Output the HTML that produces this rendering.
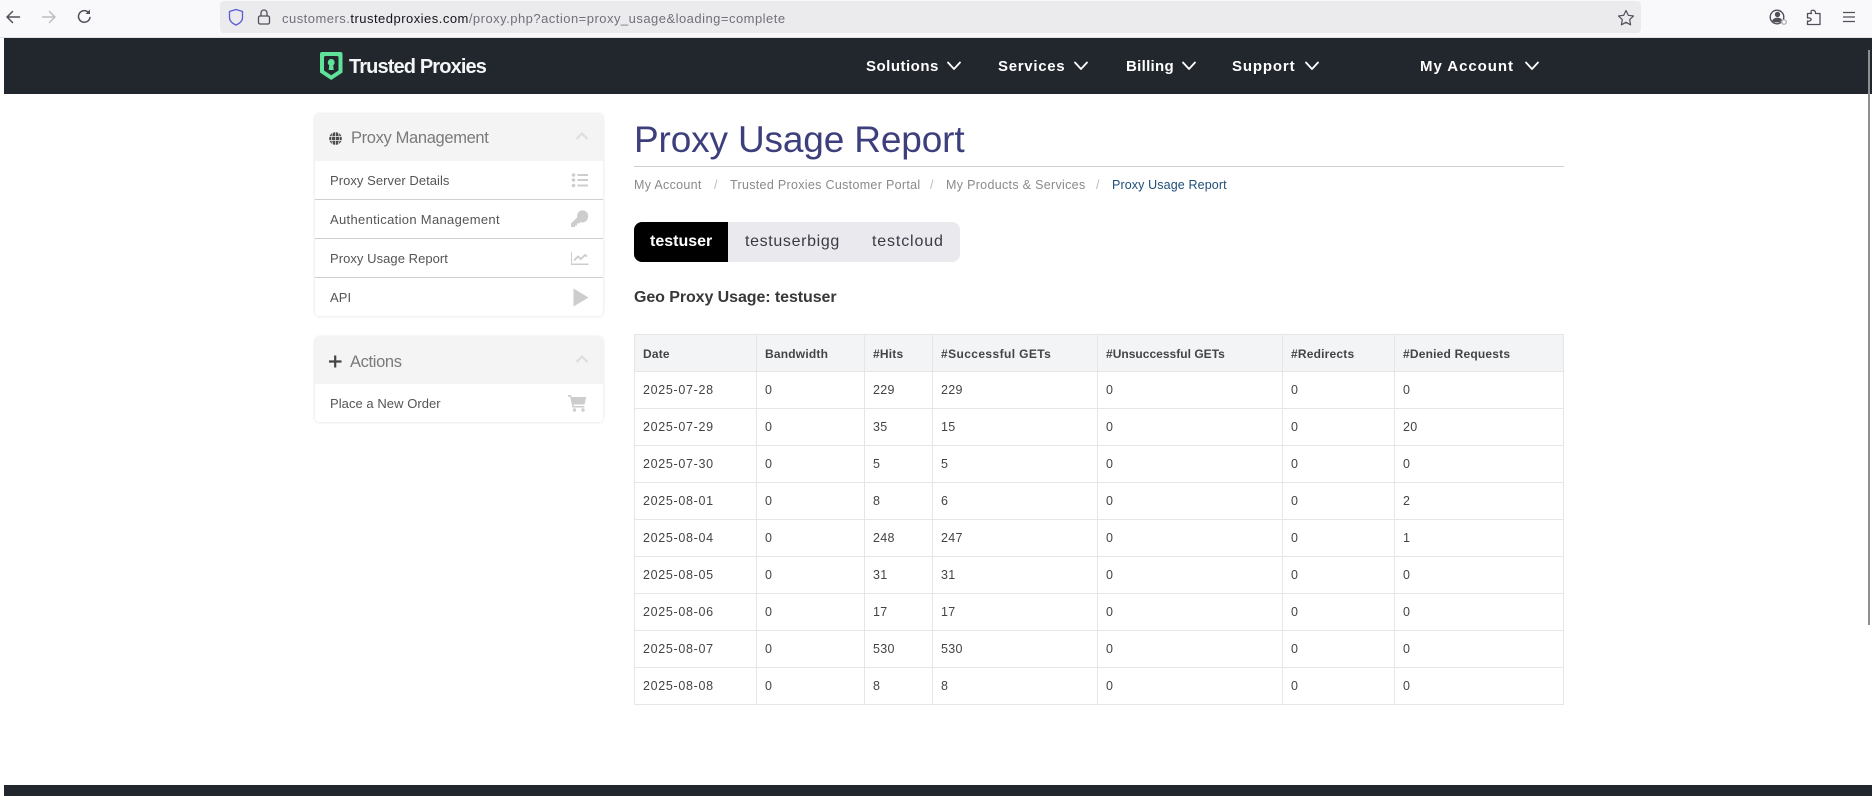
<!DOCTYPE html>
<html lang="en">
<head>
<meta charset="utf-8">
<title>Proxy Usage Report</title>
<style>
html,body{margin:0;padding:0;width:1872px;height:796px;overflow:hidden;background:#fff;font-family:"Liberation Sans",sans-serif}
.t{position:absolute;white-space:nowrap;line-height:20px;height:20px}
svg{position:absolute;overflow:visible}
.toolbar{position:absolute;left:0;top:0;width:1872px;height:37px;background:#f9f9fb;border-bottom:1px solid #e3e3e6}
.urlbar{position:absolute;left:220px;top:1px;width:1421px;height:32px;background:#ebebee;border-radius:4px}
.nav{position:absolute;left:4px;top:38px;width:1868px;height:56px;background:#22262d}
.foot{position:absolute;left:4px;top:785px;width:1868px;height:11px;background:#22262d}
.sb{position:absolute;left:1868px;top:50px;width:2px;height:575px;background:#8f8f8f}
.nl{color:#fff;font-weight:bold;font-size:15px;letter-spacing:.5px}
.panel{position:absolute;left:315px;width:288px;background:#fff;border-radius:4px;box-shadow:0 0 3px rgba(0,0,0,.14)}
.ph{position:absolute;left:0;top:0;width:288px;height:47px;background:#f4f4f4;border-radius:4px 4px 0 0}
.sep{position:absolute;left:315px;width:288px;height:1px;background:#cfcfcf}
.pt{color:#7a7a7a;font-size:16.5px;letter-spacing:-.35px}
.it{color:#555;font-size:13px;letter-spacing:.05px}
.bc{color:#8a8a8a;font-size:12.5px;letter-spacing:.31px}
table{position:absolute;left:634px;top:334px;width:929px;border-collapse:collapse;table-layout:fixed;font-size:12.5px;color:#444}
td,th{border:1px solid #e6e6e6;height:36px;padding:0 0 0 8px;text-align:left;letter-spacing:.32px;font-weight:normal}
td:first-child{letter-spacing:.68px}
th{background:#f3f4f6;font-weight:bold;font-size:12px;letter-spacing:.2px;padding-top:1px;height:35px}
th:first-child{letter-spacing:.2px}
</style>
</head>
<body>
<div class="toolbar"></div>
<div class="urlbar"></div>
<svg style="left:0;top:0" width="300" height="36" fill="none" stroke-linecap="round" stroke-linejoin="round">
<path d="M19.500 17H7M12.500 11.500L7 17l5.500 5.500" stroke="#50505a" stroke-width="1.500"/>
<path d="M42.500 17H55M49.500 11.500L55 17l-5.500 5.500" stroke="#bdbdc2" stroke-width="1.500"/>
<path d="M90 17.500a5.800 5.800 0 1 1-2-5.500" stroke="#50505a" stroke-width="1.500"/>
<path d="M90 9.500v4.500h-4.500z" fill="#50505a"/>
<path d="M236 9.500l6.500 2v6c0 3.500-3 6-6.500 7.500-3.500-1.500-6.500-4-6.500-7.500v-6z" stroke="#5b5bd6" stroke-width="1.300"/>
<rect x="258.500" y="16" width="11" height="8" rx="1.500" stroke="#50505a" stroke-width="1.300"/>
<path d="M261 16v-3a3 3 0 0 1 6 0v3" stroke="#50505a" stroke-width="1.300"/>
</svg>
<div class="t" style="left:282px;top:9px;font-size:13px;color:#70707a;letter-spacing:.48px">customers.<span style="color:#15141a">trustedproxies.com</span>/proxy.php?action=proxy_usage&amp;loading=complete</div>
<svg style="left:1600px;top:0" width="272" height="36" fill="none" stroke="#50505a" stroke-width="1.200" stroke-linejoin="round">
<path d="M26 10.500l2.300 4.800 5.200.7-3.800 3.600.9 5.200-4.600-2.500-4.600 2.500.9-5.200-3.800-3.600 5.200-.7z"/>
<circle cx="177" cy="17" r="6.800" stroke-width="1.400"/>
<circle cx="177.500" cy="14.500" r="2.700" fill="#50505a" stroke="none"/>
<path d="M172 21c1-2.500 3-3.300 5.500-3.300s3.500.8 4.500 2.200l-2 2.500h-6z" fill="#50505a" stroke="none"/>
<circle cx="184" cy="22" r="2.300" stroke="#a8a8ae" fill="#f9f9fb"/>
<path d="M207.500 24.500h12.500V13.500h-4.500c.8-3.500-4.500-4.500-4.500-1.500 0 .5.200 1 .5 1.500h-4v4.500c2.800-.5 4 .8 3.500 2-.4 1-2 1.500-3.500 1z" stroke-width="1.300"/>
<path d="M243 12.500h12M243 17h12M243 21.500h12" stroke-width="1.200"/>
</svg>

<div class="nav"></div>
<svg style="left:319px;top:51px" width="25" height="30" viewBox="0 0 25 30">
<path d="M3 1h18.500a2 2 0 0 1 2 2v18.500L12.200 29 1 21.500V3a2 2 0 0 1 2-2z" fill="#5fe39a"/>
<path d="M6.500 5h11.500a1.500 1.500 0 0 1 1.500 1.500v13l-7.300 4.800L5 19.500v-13A1.500 1.500 0 0 1 6.500 5z" fill="#22262d"/>
<path d="M12.200 8a3.500 3.500 0 0 1 2 6.300l.5 4.700H9.700l.5-4.700a3.500 3.500 0 0 1 2-6.300z" fill="#5fe39a"/>
</svg>
<div class="t" style="left:349px;top:57px;font-size:20px;font-weight:bold;color:#f4f5f6;letter-spacing:-.87px">Trusted Proxies</div>
<div class="t nl" style="left:866px;top:57px">Solutions</div>
<div class="t nl" style="left:998px;top:57px;letter-spacing:.7px">Services</div>
<div class="t nl" style="left:1126px;top:57px;letter-spacing:.3px">Billing</div>
<div class="t nl" style="left:1232px;top:57px;letter-spacing:.85px">Support</div>
<div class="t nl" style="left:1420px;top:57px;letter-spacing:.95px">My Account</div>
<svg style="left:0;top:0" width="1872" height="94" fill="none" stroke="#fff" stroke-width="1.800" stroke-linecap="round" stroke-linejoin="round">
<path d="M948 62.500l6 6.500 6-6.500M1075 62.500l6 6.500 6-6.500M1183 62.500l6 6.500 6-6.500M1306 62.500l6 6.500 6-6.500M1526 62.500l6 6.500 6-6.500"/>
</svg>
<div class="sb"></div>

<div class="panel" style="top:114px;height:202px"><div class="ph"></div></div>
<div class="panel" style="top:337px;height:85px"><div class="ph"></div></div>
<div class="sep" style="top:199px"></div>
<div class="sep" style="top:238px"></div>
<div class="sep" style="top:277px"></div>

<svg style="left:329px;top:132px" width="13" height="13" viewBox="0 0 13 13">
<circle cx="6.500" cy="6.500" r="6.300" fill="#4a4a4a"/>
<path d="M0 4.500h13M0 8.500h13M6.500 0v13M3.800 1c-1.500 3.500-1.500 7.500 0 11M9.200 1c1.500 3.500 1.500 7.500 0 11" stroke="#f4f4f4" stroke-width=".7" fill="none"/>
</svg>
<div class="t pt" style="left:351px;top:128px">Proxy Management</div>
<svg style="left:329px;top:355px" width="13" height="13"><path d="M6.200 0.500v12M0 6.500h12.500" stroke="#444" stroke-width="2.200"/></svg>
<div class="t pt" style="left:350px;top:352px">Actions</div>
<svg style="left:0;top:0" width="700" height="430" fill="none" stroke="#dedede" stroke-width="2.200">
<path d="M576.500 139l5.500-5.500 5.500 5.500M576.500 362l5.500-5.500 5.500 5.500"/>
</svg>
<div class="t it" style="left:330px;top:171px">Proxy Server Details</div>
<div class="t it" style="left:330px;top:210px;letter-spacing:.32px">Authentication Management</div>
<div class="t it" style="left:330px;top:249px">Proxy Usage Report</div>
<div class="t it" style="left:330px;top:288px">API</div>
<div class="t it" style="left:330px;top:394px">Place a New Order</div>

<svg style="left:0;top:0" width="700" height="430" fill="#cdcdcd">
<circle cx="573.500" cy="175" r="1.800"/><circle cx="573.500" cy="180" r="1.800"/><circle cx="573.500" cy="185.500" r="1.800"/>
<path d="M577.500 174h10.500v2h-10.500zM577.500 179h10.500v2h-10.500zM577.500 184.500h10.500v2h-10.500z"/>
<path d="M588 217a5.500 5.500 0 0 1-7.500 5.100l-1.500 1.400h-2v2h-2v1.500h-4v-3.500l6.300-6.300A5.500 5.500 0 1 1 588 217z"/>
<path d="M572 252v11.500h16.500v1.500H571v-13z"/>
<path d="M574 260.500l4-4 3 2.500 4-4 2 1.500" fill="none" stroke="#cdcdcd" stroke-width="1.800"/>
<path d="M573.500 288.500L588.500 297.500l-15 9z"/>
<path d="M568 395h3l.7 2h14.500l-1.700 7.500h-11l.4 1.500h10.400v1.500h-11.800l-2.300-10.800H568z"/>
<circle cx="574.500" cy="410" r="1.700"/><circle cx="583" cy="410" r="1.700"/>
</svg>

<div class="t" style="left:634px;top:122px;height:36px;line-height:36px;font-size:37px;color:#3d3f7d;letter-spacing:-.15px">Proxy Usage Report</div>
<div style="position:absolute;left:634px;top:166px;width:930px;height:1px;background:#cfcfcf"></div>
<div class="t bc" style="left:634px;top:175px">My Account</div>
<div class="t bc" style="left:714px;top:175px;color:#bbb">/</div>
<div class="t bc" style="left:730px;top:175px">Trusted Proxies Customer Portal</div>
<div class="t bc" style="left:930px;top:175px;color:#bbb">/</div>
<div class="t bc" style="left:946px;top:175px">My Products &amp; Services</div>
<div class="t bc" style="left:1096px;top:175px;color:#bbb">/</div>
<div class="t bc" style="left:1112px;top:175px;color:#1f4e79;letter-spacing:.12px">Proxy Usage Report</div>

<div style="position:absolute;left:634px;top:222px;width:326px;height:40px;background:#e9e9ee;border-radius:8px"></div>
<div style="position:absolute;left:634px;top:222px;width:94px;height:40px;background:#000;border-radius:8px 0 0 8px"></div>
<div class="t" style="left:650px;top:232px;font-size:16px;color:#fff;font-weight:bold;letter-spacing:0">testuser</div>
<div class="t" style="left:745px;top:232px;font-size:16px;color:#3a3a44;letter-spacing:.65px">testuserbigg</div>
<div class="t" style="left:872px;top:232px;font-size:16px;color:#3a3a44;letter-spacing:.85px">testcloud</div>
<div class="t" style="left:634px;top:288px;font-size:16px;font-weight:bold;color:#383838;letter-spacing:-.08px">Geo Proxy Usage: testuser</div>

<table>
<colgroup><col style="width:122px"><col style="width:108px"><col style="width:68px"><col style="width:165px"><col style="width:185px"><col style="width:112px"><col style="width:169px"></colgroup>
<tr><th>Date</th><th>Bandwidth</th><th>#Hits</th><th style="letter-spacing:.4px">#Successful GETs</th><th style="letter-spacing:.02px">#Unsuccessful GETs</th><th>#Redirects</th><th>#Denied Requests</th></tr>
<tr><td>2025-07-28</td><td>0</td><td>229</td><td>229</td><td>0</td><td>0</td><td>0</td></tr>
<tr><td>2025-07-29</td><td>0</td><td>35</td><td>15</td><td>0</td><td>0</td><td>20</td></tr>
<tr><td>2025-07-30</td><td>0</td><td>5</td><td>5</td><td>0</td><td>0</td><td>0</td></tr>
<tr><td>2025-08-01</td><td>0</td><td>8</td><td>6</td><td>0</td><td>0</td><td>2</td></tr>
<tr><td>2025-08-04</td><td>0</td><td>248</td><td>247</td><td>0</td><td>0</td><td>1</td></tr>
<tr><td>2025-08-05</td><td>0</td><td>31</td><td>31</td><td>0</td><td>0</td><td>0</td></tr>
<tr><td>2025-08-06</td><td>0</td><td>17</td><td>17</td><td>0</td><td>0</td><td>0</td></tr>
<tr><td>2025-08-07</td><td>0</td><td>530</td><td>530</td><td>0</td><td>0</td><td>0</td></tr>
<tr><td>2025-08-08</td><td>0</td><td>8</td><td>8</td><td>0</td><td>0</td><td>0</td></tr>
</table>
<div class="foot"></div>
</body>
</html>
